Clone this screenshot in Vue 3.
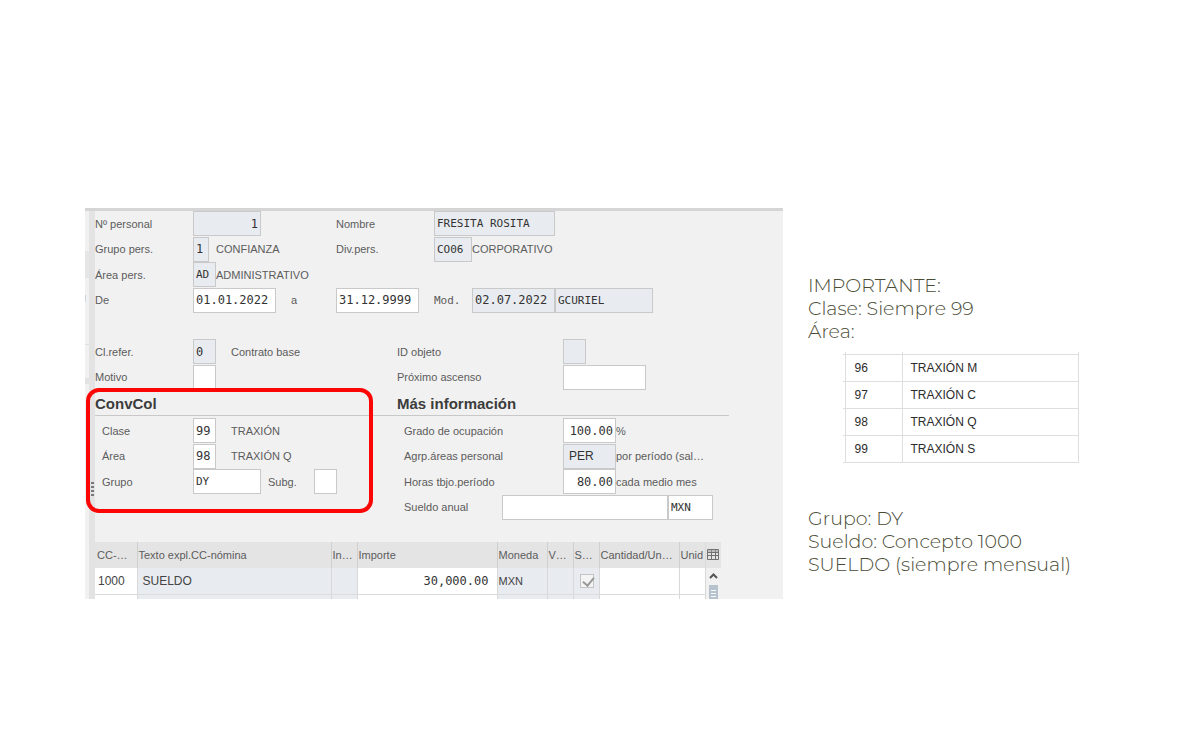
<script setup>
const areas = [
  ['96', 'TRAXIÓN M'],
  ['97', 'TRAXIÓN C'],
  ['98', 'TRAXIÓN Q'],
  ['99', 'TRAXIÓN S'],
]
</script>

<template>
  <main class="page">
    <section class="panel">
      <div class="rail">
        <span class="tab tab-a"></span>
        <span class="tab tab-b"></span>
        <span class="tab tab-c"></span>
        <svg class="grip" width="3" height="14" viewBox="0 0 3 14">
          <path d="M0 0h3v2H0zM0 4h3v2H0zM0 8h3v2H0zM0 12h3v2H0z" fill="#777" />
        </svg>
      </div>
      <div class="content">
        <form class="form" @submit.prevent>
          <div class="block header-block">
            <div class="row">
              <label for="num">Nº personal</label>
              <div class="cell"><input id="num" class="w68 num" value="1" readonly /></div>
              <label for="nombre">Nombre</label>
              <div class="cell"><input id="nombre" class="w121 code" value="FRESITA ROSITA" readonly /></div>
            </div>
            <div class="row">
              <label for="gp">Grupo pers.</label>
              <div class="cell"><input id="gp" class="w16" value="1" readonly /><span class="gap7">CONFIANZA</span></div>
              <label for="dp">Div.pers.</label>
              <div class="cell"><input id="dp" class="w38 code" value="CO06" readonly /><span>CORPORATIVO</span></div>
            </div>
            <div class="row">
              <label for="ap">Área pers.</label>
              <div class="cell"><input id="ap" class="w23 code" value="AD" readonly /><span>ADMINISTRATIVO</span></div>
            </div>
            <div class="row">
              <label for="de">De</label>
              <div class="cell"><input id="de" class="w83" value="01.01.2022" /><label class="gap15" for="hasta">a</label></div>
              <div class="cell"><input id="hasta" class="w83" value="31.12.9999" /></div>
              <div class="cell"><label class="mod" for="mod">Mod.</label><input id="mod" class="w83" value="02.07.2022" readonly /><input class="w98 code" aria-label="Modificado por" value="GCURIEL" readonly /></div>
            </div>
            <div class="row"></div>
            <div class="row wide">
              <label for="cl">Cl.refer.</label>
              <div class="cell"><input id="cl" class="w23" value="0" readonly /><span class="gap15">Contrato base</span></div>
              <label for="ido">ID objeto</label>
              <div class="cell"><input id="ido" class="w23" readonly /></div>
            </div>
            <div class="row wide">
              <label for="mot">Motivo</label>
              <div class="cell"><input id="mot" class="w23" /></div>
              <label for="asc">Próximo ascenso</label>
              <div class="cell"><input id="asc" class="w83" /></div>
            </div>
          </div>
          <div class="titles">
            <h2>ConvCol</h2>
            <h2>Más información</h2>
          </div>
          <div class="block detail-block">
            <div class="row wide">
              <label class="in" for="clase">Clase</label>
              <div class="cell"><input id="clase" class="w23" value="99" /><span class="gap15">TRAXIÓN</span></div>
              <label class="in" for="grado">Grado de ocupación</label>
              <div class="cell"><input id="grado" class="w53 num" value="100.00" /><span>%</span></div>
            </div>
            <div class="row wide">
              <label class="in" for="area">Área</label>
              <div class="cell"><input id="area" class="w23" value="98" /><span class="gap15">TRAXIÓN Q</span></div>
              <label class="in" for="agrp">Agrp.áreas personal</label>
              <div class="cell"><input id="agrp" class="w53 sans" value="PER" readonly /><span>por período (sal…</span></div>
            </div>
            <div class="row wide">
              <label class="in" for="grupo">Grupo</label>
              <div class="cell"><input id="grupo" class="w68 code" value="DY" /><label class="subg" for="subg">Subg.</label><input id="subg" class="w23" /></div>
              <label class="in" for="horas">Horas tbjo.período</label>
              <div class="cell"><input id="horas" class="w53 num" value="80.00" /><span>cada medio mes</span></div>
            </div>
            <div class="row wide">
              <div class="cell salary"><label class="in" for="sueldo">Sueldo anual</label><input id="sueldo" class="w166" /><input class="w45 code" aria-label="Moneda" value="MXN" /></div>
            </div>
          </div>
        </form>

        <table class="grid">
          <colgroup>
            <col class="c42" /><col class="c194" /><col class="c26" /><col class="c140" /><col class="c50" />
            <col class="c26" /><col class="c26" /><col class="c80" /><col class="c26" /><col class="c16" />
          </colgroup>
          <thead>
            <tr>
              <th>CC-…</th><th>Texto expl.CC-nómina</th><th>In…</th><th>Importe</th><th>Moneda</th>
              <th>V…</th><th>S…</th><th>Cantidad/Un…</th><th>Unid</th>
              <th class="tool">
                <svg width="13" height="12" viewBox="0 0 13 12" fill="none" stroke="#707070">
                  <path d="M.5 .5h11v10H.5zM.5 3.5h11M.5 6.5h11M4.5 .5v10M8.5 .5v10" />
                  <path d="M1 2h10" stroke="#9a9a9a" />
                </svg>
              </th>
            </tr>
          </thead>
          <tbody>
            <tr class="data">
              <td class="key">1000</td><td class="ro name">SUELDO</td><td class="ro"></td><td class="amount">30,000.00</td>
              <td class="ro">MXN</td><td class="ro"></td>
              <td class="ro tick"><input type="checkbox" aria-label="S" checked disabled /></td>
              <td></td><td></td>
              <td class="scroll" rowspan="2">
                <svg width="16" height="31" viewBox="0 0 16 31">
                  <path d="M4 10 7.500 6.500 11 10" fill="none" stroke="#555" stroke-width="2" />
                  <path d="M3 17h9v14H3z" fill="#b6c2ce" />
                  <path d="M5 22.500h5M5 25.500h5M5 28.500h5" stroke="#f8fafc" />
                </svg>
              </td>
            </tr>
            <tr class="more">
              <td></td><td class="ro"></td><td class="ro"></td><td></td><td class="ro"></td><td class="ro"></td><td class="ro"></td><td></td><td></td>
            </tr>
          </tbody>
        </table>
      </div>
      <div class="highlight"></div>
    </section>

    <aside class="notes">
      <p>IMPORTANTE:<br />Clase: Siempre 99<br />Área:</p>
      <table class="areas">
        <tbody>
          <tr class="stub"><td class="edge"></td><td></td><td></td></tr>
          <tr v-for="[id, name] in areas" :key="id">
            <td class="edge"></td><td class="id">{{ id }}</td><td class="area-name">{{ name }}</td>
          </tr>
        </tbody>
      </table>
      <p>Grupo: DY<br />Sueldo: Concepto 1000<br />SUELDO (siempre mensual)</p>
    </aside>
  </main>
</template>

<style>
body {
  background: #fff;
}
</style>

<style scoped>
* {
  box-sizing: border-box;
}
.page {
  display: grid;
  grid-template-columns: minmax(0, 698fr) minmax(0, 392fr);
  gap: 25px;
  align-items: start;
  padding: 208px 0 0 85px;
  font-family: "Liberation Sans", Arial, sans-serif;
  font-size: 11px;
  color: #5c5c5c;
}
.panel {
  position: relative;
  display: flex;
  background: #f1f1f1;
  border-top: 3px solid #d5d5d5;
}
.rail {
  position: relative;
  flex: 0 0 10px;
  border-right: 6px solid #e3e3e3;
}
.tab {
  position: absolute;
  left: 0;
  width: 4px;
}
.tab-a {
  top: 40px;
  height: 27px;
  background: #e6e6e6;
}
.tab-b {
  top: 84px;
  height: 7px;
  width: 1px;
  background: #cbd5e2;
}
.tab-c {
  top: 133px;
  height: 40px;
  border-top: 1px solid #e0e0e0;
  border-bottom: 6px solid #e3e3e3;
}
.grip {
  position: absolute;
  top: 271px;
  left: 6px;
}
.content {
  flex: 1;
  min-width: 0;
}
.block {
  display: grid;
  grid-auto-rows: 1fr;
}
.header-block {
  min-height: 179px;
}
.detail-block {
  min-height: 102px;
}
.row {
  display: grid;
  grid-template-columns: 98px 143px 98px 1fr;
  align-items: center;
}
.row.wide {
  grid-template-columns: 98px 204px 166px 1fr;
}
.cell {
  display: flex;
  align-items: center;
  white-space: nowrap;
}
.salary {
  grid-column: 3 / 5;
}
.salary label {
  width: 105px;
}
.in {
  padding-left: 7px;
}
.gap7 {
  padding-left: 7px;
}
.gap15 {
  padding-left: 15px;
}
.mod {
  width: 38px;
  font-family: "DejaVu Sans Mono", monospace;
}
.subg {
  width: 53px;
  padding-left: 7px;
}
.form input {
  height: 25px;
  margin: 0;
  padding: 0 2px;
  border: 1px solid #c9c9c9;
  border-radius: 0;
  outline: 0;
  background: #fff;
  color: #333;
  font: 12px "DejaVu Sans Mono", monospace;
}
.form input:read-only {
  background: #e8ecf0;
}
.form input.code {
  font-size: 11px;
}
.form input.sans {
  padding-left: 5px;
  font: 12px "Liberation Sans", Arial, sans-serif;
}
.form input.num {
  text-align: right;
}
.w16 { width: 16px; }
.w23 { width: 23px; }
.w38 { width: 38px; }
.w45 { width: 45px; }
.w53 { width: 53px; }
.w68 { width: 68px; }
.w83 { width: 83px; }
.w98 { width: 98px; }
.w121 { width: 121px; }
.w166 { width: 166px; }
.titles {
  display: grid;
  grid-template-columns: 302px 1fr;
  max-width: 634px;
  margin-bottom: 2px;
  border-bottom: 1px solid #c8c8c8;
}
h2 {
  margin: 0;
  padding-top: 2px;
  font-size: 15px;
  line-height: 23px;
  color: #3c3c3c;
}
.grid {
  width: 100%;
  max-width: 626px;
  margin-top: 22px;
  table-layout: fixed;
  border-collapse: collapse;
}
.c42 { width: 42px; }
.c194 { width: 194px; }
.c26 { width: 26px; }
.c140 { width: 140px; }
.c50 { width: 50px; }
.c80 { width: 80px; }
.c16 { width: 16px; }
.grid th {
  height: 26px;
  padding: 0 0 0 1px;
  background: #e4e4e4;
  border-left: 1px solid #cfcfcf;
  font-weight: 400;
  text-align: left;
  white-space: nowrap;
}
.grid th:first-child,
.grid td:first-child {
  border-left: 0;
  padding-left: 2px;
}
.grid th.tool {
  padding: 0 0 0 1px;
  border-left-color: #dadada;
}
.grid svg {
  display: block;
}
.grid td {
  padding: 0 0 0 1px;
  background: #fff;
  border-left: 1px solid #d8d8d8;
  color: #444;
}
.data td {
  height: 26px;
  border-bottom: 1px solid #dcdcdc;
}
.more td {
  height: 5px;
}
.grid td.ro {
  background: #e8ecf0;
}
.grid td.name {
  padding-left: 5px;
  font-size: 12px;
}
.grid td.key {
  padding-left: 3px;
  font-size: 12px;
}
.grid td.amount {
  padding-right: 8px;
  text-align: right;
  font: 12px "DejaVu Sans Mono", monospace;
  color: #333;
}
.grid td.scroll {
  padding: 0;
  background: #f1f1f1;
  border-bottom: 0;
}
.tick input {
  appearance: none;
  display: block;
  width: 14px;
  height: 14px;
  margin: 0 0 0 5px;
  border: 1px solid #c4c4c4;
  background: #f4f4f4;
}
.tick input::after {
  content: "";
  display: block;
  width: 5px;
  height: 9px;
  margin: 0 0 0 4px;
  border: solid #999;
  border-width: 0 2px 2px 0;
  transform: rotate(40deg);
}
.highlight {
  position: absolute;
  top: 177px;
  left: 1px;
  width: 287px;
  height: 125px;
  border: 4px solid #fb0505;
  border-radius: 13px;
  pointer-events: none;
}
.notes {
  min-width: 0;
  padding-top: 66px;
}
.notes p {
  margin: 0;
  font-family: Montserrat, Inter, sans-serif;
  font-weight: 300;
  font-size: 19px;
  line-height: 23px;
  color: #4a4c36;
}
.areas {
  width: 236px;
  margin: 9px 0 44px 35px;
  border-collapse: collapse;
  font-size: 12px;
  color: #2c2c2c;
}
.areas td {
  height: 27px;
  padding: 0;
  border: 1px solid #dedede;
}
.areas .stub td {
  height: 2px;
  border-top: 0;
}
.areas td.edge {
  width: 2px;
  border-left: 0;
}
.areas td.id {
  width: 57px;
  padding-left: 9px;
}
.areas td.area-name {
  padding-left: 8px;
}
</style>
